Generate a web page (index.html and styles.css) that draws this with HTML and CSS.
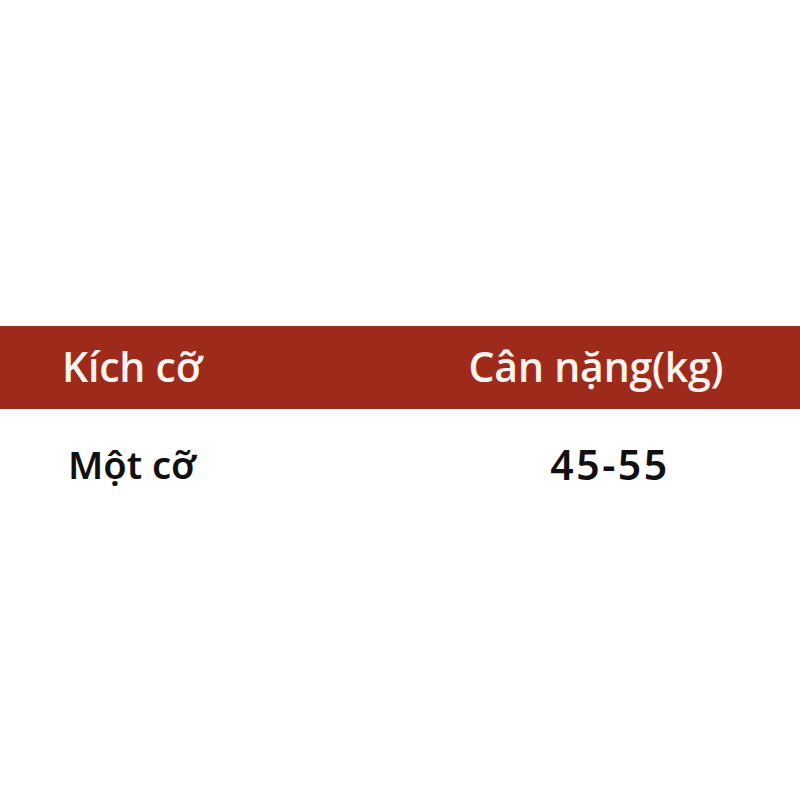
FILE: index.html
```html
<!DOCTYPE html>
<html lang="vi">
<head>
<meta charset="utf-8">
<link rel="stylesheet" href="styles.css">
</head>
<body>
<div class="page">
  <div class="table">
    <div class="row head">
      <div class="cell">Kích cỡ</div>
      <div class="cell">Cân nặng(kg)</div>
    </div>
    <div class="row body">
      <div class="cell">Một cỡ</div>
      <div class="cell num">45-55</div>
    </div>
  </div>
</div>
</body>
</html>
```
FILE: styles.css
```css
html, body {
  margin: 0;
  padding: 0;
  background: #ffffff;
}
.page {
  width: 800px;
  height: 800px;
  padding-top: 326px;
  box-sizing: border-box;
}
.row {
  display: grid;
  grid-template-columns: 264px 400px;
  column-gap: 132px;
  align-items: center;
}
.cell {
  text-align: center;
  white-space: nowrap;
}
.head {
  height: 83px;
  background: #9e2a1b;
  color: #fdf3ef;
  font-family: "Open Sans", sans-serif;
  font-weight: 600;
  font-size: 41px;
  letter-spacing: -0.2px;
  padding-bottom: 4px;
  box-sizing: border-box;
}
.body {
  height: 110px;
  color: #111111;
  font-family: "Noto Sans", sans-serif;
  font-weight: 600;
  font-size: 38px;
}
.num {
  font-size: 41px;
  letter-spacing: 2.5px;
  padding-left: 28px;
}
```
